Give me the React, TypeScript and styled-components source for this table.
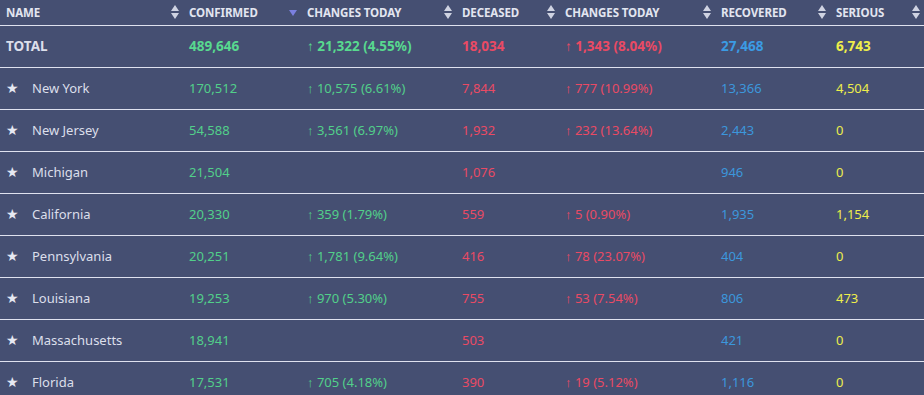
import React from "react";
import styled, { createGlobalStyle } from "styled-components";

const Global = createGlobalStyle`
  html, body { margin: 0; padding: 0; background: #454f72; }
  body { font-family: "Segoe UI", "Noto Sans", "Open Sans", sans-serif; }
`;

const Table = styled.table`
  width: 924px;
  border-collapse: collapse;
  table-layout: fixed;
  background: #454f72;
  color: #dcdfeb;
  font-size: 13px;
`;

const Th = styled.th`
  height: 24px;
  padding: 0 4px 1px 6px;
  border-bottom: 1px solid #dfe2ef;
  text-align: left;
  vertical-align: middle;
`;

const HeadInner = styled.div`
  display: flex;
  align-items: center;
  justify-content: space-between;
  font-size: 11.5px;
  font-weight: 700;
  letter-spacing: -0.1px;
  color: #e2e5f0;
  text-transform: uppercase;
  white-space: nowrap;
`;

const Tr = styled.tr`
  height: 42px;
  border-bottom: 1px solid #dfe2ef;
`;

const Td = styled.td<{ $tone?: string; $bold?: boolean }>`
  padding: 0 6px 1px;
  vertical-align: middle;
  white-space: nowrap;
  font-weight: ${(p) => (p.$bold ? 700 : 400)};
  font-size: ${(p) => (p.$bold ? "13.5px" : "13px")};
  color: ${(p) =>
    p.$tone === "green"
      ? p.$bold ? "#58d98f" : "#52cf8a"
      : p.$tone === "red"
      ? "#ea4a64"
      : p.$tone === "blue"
      ? p.$bold ? "#3b9be4" : "#3c97dc"
      : p.$tone === "yellow"
      ? "#eeee4a"
      : "#dcdfeb"};
`;

const NameWrap = styled.div`
  display: flex;
  align-items: center;
`;

const Star = styled.span`
  width: 26px;
  font-size: 14px;
  line-height: 1;
  color: #e6e8f2;
`;

const SortIcon = () => (
  <svg width="8" height="14" viewBox="0 0 8 14" aria-hidden>
    <path d="M4 0 L8 6 L0 6 Z" fill="#cfd3e2" />
    <path d="M4 14 L8 8 L0 8 Z" fill="#cfd3e2" />
  </svg>
);

const SortDesc = () => (
  <svg width="8" height="14" viewBox="0 0 8 14" aria-hidden style={{ marginTop: 9 }}>
    <path d="M0 0 L8 0 L4 6 Z" fill="#7b80e0" />
  </svg>
);

type Row = {
  name: string;
  confirmed: string;
  cChange: string;
  deceased: string;
  dChange: string;
  recovered: string;
  serious: string;
};

const rows: Row[] = [
  { name: "New York", confirmed: "170,512", cChange: "↑ 10,575 (6.61%)", deceased: "7,844", dChange: "↑ 777 (10.99%)", recovered: "13,366", serious: "4,504" },
  { name: "New Jersey", confirmed: "54,588", cChange: "↑ 3,561 (6.97%)", deceased: "1,932", dChange: "↑ 232 (13.64%)", recovered: "2,443", serious: "0" },
  { name: "Michigan", confirmed: "21,504", cChange: "", deceased: "1,076", dChange: "", recovered: "946", serious: "0" },
  { name: "California", confirmed: "20,330", cChange: "↑ 359 (1.79%)", deceased: "559", dChange: "↑ 5 (0.90%)", recovered: "1,935", serious: "1,154" },
  { name: "Pennsylvania", confirmed: "20,251", cChange: "↑ 1,781 (9.64%)", deceased: "416", dChange: "↑ 78 (23.07%)", recovered: "404", serious: "0" },
  { name: "Louisiana", confirmed: "19,253", cChange: "↑ 970 (5.30%)", deceased: "755", dChange: "↑ 53 (7.54%)", recovered: "806", serious: "473" },
  { name: "Massachusetts", confirmed: "18,941", cChange: "", deceased: "503", dChange: "", recovered: "421", serious: "0" },
  { name: "Florida", confirmed: "17,531", cChange: "↑ 705 (4.18%)", deceased: "390", dChange: "↑ 19 (5.12%)", recovered: "1,116", serious: "0" },
];

const headers: { label: string; width: number; sorted?: boolean }[] = [
  { label: "Name", width: 183 },
  { label: "Confirmed", width: 118, sorted: true },
  { label: "Changes Today", width: 155 },
  { label: "Deceased", width: 103 },
  { label: "Changes Today", width: 156 },
  { label: "Recovered", width: 115 },
  { label: "Serious", width: 94 },
];

export default function App() {
  return (
    <>
      <Global />
      <Table>
        <colgroup>
          {headers.map((h, i) => (
            <col key={i} style={{ width: h.width }} />
          ))}
        </colgroup>
        <thead>
          <tr>
            {headers.map((h, i) => (
              <Th key={i}>
                <HeadInner>
                  <span>{h.label}</span>
                  {h.sorted ? <SortDesc /> : <SortIcon />}
                </HeadInner>
              </Th>
            ))}
          </tr>
        </thead>
        <tbody>
          <Tr>
            <Td $bold>TOTAL</Td>
            <Td $bold $tone="green">489,646</Td>
            <Td $bold $tone="green">↑ 21,322 (4.55%)</Td>
            <Td $bold $tone="red">18,034</Td>
            <Td $bold $tone="red">↑ 1,343 (8.04%)</Td>
            <Td $bold $tone="blue">27,468</Td>
            <Td $bold $tone="yellow">6,743</Td>
          </Tr>
          {rows.map((r) => (
            <Tr key={r.name}>
              <Td>
                <NameWrap>
                  <Star>★</Star>
                  <span>{r.name}</span>
                </NameWrap>
              </Td>
              <Td $tone="green">{r.confirmed}</Td>
              <Td $tone="green">{r.cChange}</Td>
              <Td $tone="red">{r.deceased}</Td>
              <Td $tone="red">{r.dChange}</Td>
              <Td $tone="blue">{r.recovered}</Td>
              <Td $tone="yellow">{r.serious}</Td>
            </Tr>
          ))}
        </tbody>
      </Table>
    </>
  );
}
